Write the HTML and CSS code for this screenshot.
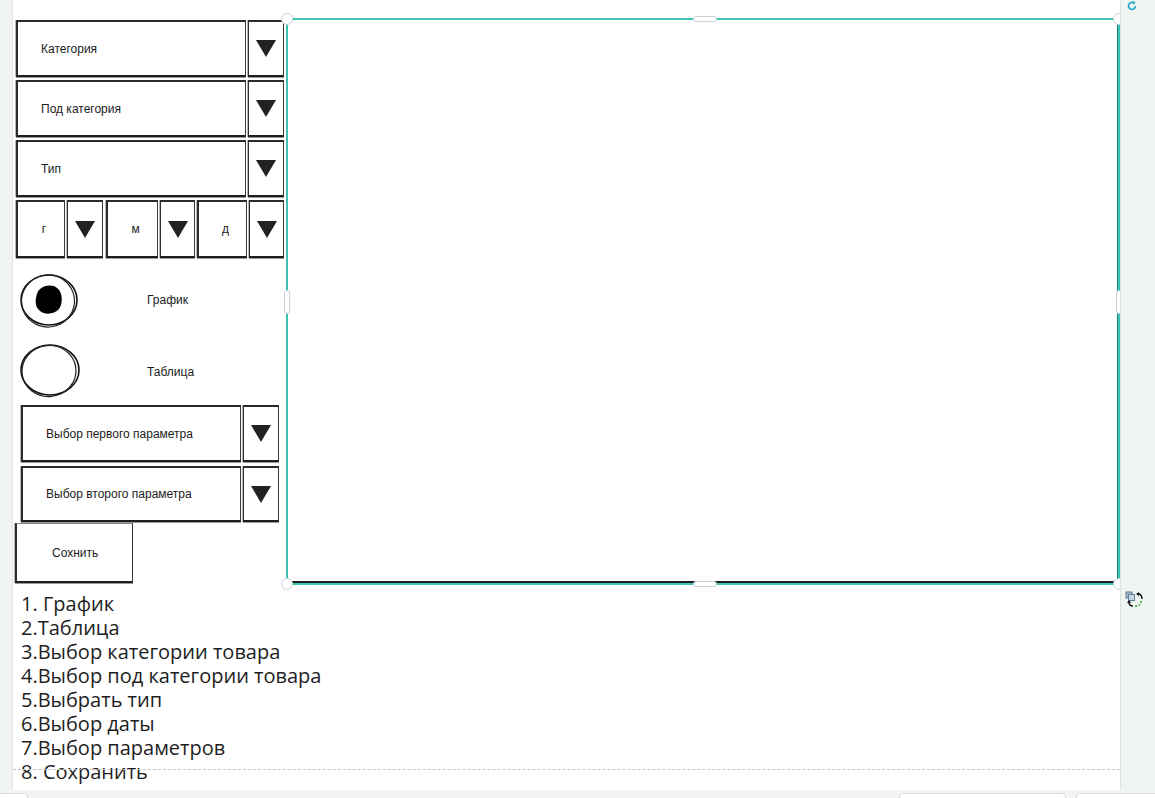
FILE: index.html
```html
<!DOCTYPE html>
<html lang="ru">
<head>
<meta charset="utf-8">
<title>Макет</title>
<link rel="stylesheet" href="styles.css">
</head>
<body>
<div class="page">
  <div class="side-left"></div>
  <main class="canvas">
    <div class="top">
      <aside class="panel">
        <div class="dd">
          <div class="box field">Категория</div>
          <div class="box arrow"><span class="tri"></span></div>
        </div>
        <div class="dd">
          <div class="box field">Под категория</div>
          <div class="box arrow"><span class="tri"></span></div>
        </div>
        <div class="dd">
          <div class="box field">Тип</div>
          <div class="box arrow"><span class="tri"></span></div>
        </div>
        <div class="date-row">
          <div class="box dfield w49">г</div>
          <div class="box arrow a36"><span class="tri"></span></div>
          <div class="box dfield w52 ml3">м</div>
          <div class="box arrow a35"><span class="tri"></span></div>
          <div class="box dfield w50">д</div>
          <div class="box arrow a35"><span class="tri"></span></div>
        </div>
        <div class="radio r1">
          <svg class="circ" width="64" height="60" viewBox="0 0 64 60">
            <ellipse cx="32" cy="30" rx="28" ry="25" fill="none" stroke="#111" stroke-width="1.6"/>
            <ellipse cx="31" cy="31" rx="26.5" ry="26" fill="none" stroke="#222" stroke-width="1.2" transform="rotate(-8 31 31)"/>
            <path d="M20 24 C22 16 34 13 40 18 C46 22 46 34 42 39 C37 45 26 45 22 40 C18 36 18 30 20 24 Z" fill="#000"/>
          </svg>
          <span class="rlabel rl1">График</span>
        </div>
        <div class="radio r2">
          <svg class="circ" width="64" height="60" viewBox="0 0 64 60">
            <ellipse cx="33" cy="30" rx="29" ry="25" fill="none" stroke="#111" stroke-width="1.6"/>
            <ellipse cx="32" cy="31" rx="27" ry="25.5" fill="none" stroke="#222" stroke-width="1.2" transform="rotate(-6 32 31)"/>
          </svg>
          <span class="rlabel">Таблица</span>
        </div>
        <div class="dd pd">
          <div class="box field pf">Выбор первого параметра</div>
          <div class="box arrow"><span class="tri"></span></div>
        </div>
        <div class="dd pd pd2">
          <div class="box field pf">Выбор второго параметра</div>
          <div class="box arrow"><span class="tri"></span></div>
        </div>
        <div class="box btn">Сохнить</div>
      </aside>
      <div class="frame">
        <span class="h c tl"></span>
        <span class="h c tr"></span>
        <span class="h c bl"></span>
        <span class="h c br"></span>
        <span class="h mh mt"></span>
        <span class="h mh mb"></span>
        <span class="h mv ml"></span>
        <span class="h mv mr"></span>
      </div>
    </div>
    <ol class="notes">
      <li>1. График</li>
      <li>2.Таблица</li>
      <li>3.Выбор категории товара</li>
      <li>4.Выбор под категории товара</li>
      <li>5.Выбрать тип</li>
      <li>6.Выбор даты</li>
      <li>7.Выбор параметров</li>
      <li>8. Сохранить</li>
    </ol>
    <div class="dash"></div>
  </main>
  <div class="side-right">
    <svg class="rot" width="12" height="12" viewBox="0 0 12 12">
      <path d="M9.5 6 A3.5 3.5 0 1 1 7.5 2.8" fill="none" stroke="#2ea8c8" stroke-width="1.8"/>
      <path d="M6.5 0.8 L9.8 2.4 L7.2 5 Z" fill="#2ea8c8"/>
    </svg>
    <svg class="tf" width="20" height="18" viewBox="0 0 20 18">
      <rect x="1" y="1" width="6" height="6" fill="#9fb7c6" stroke="#5d7f97" stroke-width="1"/>
      <rect x="3.5" y="3.5" width="6" height="6" fill="#c7d7e2" stroke="#5d7f97" stroke-width="1"/>
      <path d="M13 3 C16 3 17 5 17 8" fill="none" stroke="#111" stroke-width="1.4"/>
      <path d="M11 3 L14 1 L14 5 Z" fill="#111"/>
      <path d="M16 10 C16 14 14 15 10 15" fill="none" stroke="#3aa83a" stroke-width="1.6" stroke-dasharray="2 1.5"/>
      <path d="M4 11 C4 14 5 15 8 15" fill="none" stroke="#111" stroke-width="1.4"/>
      <path d="M2 12 L4 9 L6 12 Z" fill="#111"/>
    </svg>
  </div>
</div>
<div class="bottom-strip">
  <div class="bb b0"></div>
  <div class="spacer"></div>
  <div class="bb b1"></div>
  <div class="bb b2"></div>
</div>
</body>
</html>
```

FILE: styles.css
```css
html, body {
  margin: 0;
  padding: 0;
}
body {
  background: #f2f5f3;
  font-family: "Liberation Sans", Arial, sans-serif;
  color: #1b1b1b;
  width: 1155px;
  height: 798px;
  overflow: hidden;
}
.page {
  display: flex;
  height: 790px;
}
.side-left {
  width: 13px;
  background: #f1f5f2;
  border-right: 1px solid #e2e6e3;
  box-sizing: border-box;
}
.canvas {
  position: relative;
  width: 1107px;
  background: #fff;
  height: 790px;
}
.side-right {
  position: relative;
  flex: 1;
  background: #f1f5f2;
  border-left: 1px solid #dfe3e0;
}
.top {
  display: flex;
  height: 585px;
}
.panel {
  width: 273px;
  padding-top: 20px;
  box-sizing: border-box;
  display: flex;
  flex-direction: column;
}
.box {
  box-sizing: border-box;
  border: 1px solid #3a3a3a;
  border-top: 2px solid #2a2a2a;
  border-bottom: 2px solid #1e1e1e;
  border-left: 2px solid #2c2c2c;
  box-shadow: 0 1px 0 #9a9a9a, -1px 0 0 #b5b5b5;
  background: #fff;
  display: flex;
  align-items: center;
  font-size: 12px;
}
.dd {
  display: flex;
  gap: 2px;
  margin-left: 3px;
  height: 57px;
  margin-bottom: 3px;
}
.field {
  width: 230px;
  padding-left: 23px;
}
.arrow {
  width: 36px;
  justify-content: center;
  border-left-width: 1px;
}
.tri {
  width: 0;
  height: 0;
  border-left: 10px solid transparent;
  border-right: 10px solid transparent;
  border-top: 17px solid #222;
}
.date-row {
  display: flex;
  gap: 2px;
  margin-left: 3px;
  height: 58px;
}
.dfield {
  justify-content: center;
  padding-left: 6px;
}
.w49 { width: 49px; }
.w52 { width: 52px; }
.w50 { width: 50px; }
.ml3 { margin-left: 1px; }
.a36 { width: 36px; }
.a35 { width: 35px; }
.radio {
  display: flex;
  align-items: center;
  height: 60px;
}
.r1 { margin-top: 12px; }
.r2 { margin-top: 10px; }
.circ {
  margin-left: 4px;
  flex: none;
}
.rlabel {
  font-size: 12px;
  margin-left: 66px;
  padding-top: 4px;
}
.rl1 { padding-top: 0; }
.pd {
  margin-left: 8px;
  margin-top: 5px;
  margin-bottom: 4px;
}
.pd2 {
  margin-top: 0;
  height: 56px;
  margin-bottom: 1px;
}
.pf {
  width: 220px;
  padding-left: 23px;
}
.btn {
  margin-left: 2px;
  width: 118px;
  height: 60px;
  padding-left: 35px;
  border-top: 1px solid #888;
}
.frame {
  position: relative;
  margin-top: 18px;
  width: 834px;
  height: 567px;
  box-sizing: border-box;
  border: 2px solid #3cc4b3;
  box-shadow: inset 0 -2px 0 #1d1d1d, inset -1px 0 0 #1f7f74;
  background: #fff;
}
.h {
  position: absolute;
  background: #fff;
  border: 1px solid #c9d2d6;
  box-sizing: border-box;
}
.c {
  width: 12px;
  height: 12px;
  border-radius: 50%;
}
.tl { left: -7px; top: -7px; }
.tr { right: -7px; top: -7px; }
.bl { left: -7px; bottom: -7px; }
.br { right: -7px; bottom: -7px; }
.mh {
  width: 24px;
  height: 6px;
  border-radius: 3px;
  left: 405px;
}
.mt { top: -4px; }
.mb { bottom: -4px; }
.mv {
  width: 6px;
  height: 24px;
  border-radius: 3px;
  top: 270px;
}
.ml { left: -4px; }
.mr { right: -4px; }
.notes {
  list-style: none;
  margin: 7px 0 0;
  padding: 0 0 0 8px;
  font-family: "Open Sans", "Noto Sans", sans-serif;
  font-size: 20px;
  line-height: 24px;
  color: #1e1e1e;
}
.dash {
  position: absolute;
  left: 0;
  right: 0;
  top: 769px;
  border-top: 1px dashed #c7c7c7;
}
.rot {
  position: absolute;
  left: 5px;
  top: 0px;
}
.tf {
  position: absolute;
  left: 4px;
  top: 591px;
}
.bottom-strip {
  display: flex;
  height: 8px;
  padding-top: 3px;
  box-sizing: border-box;
  gap: 10px;
}
.bb {
  background: #fff;
  border: 1px solid #dcdcdc;
  border-bottom: none;
  border-radius: 4px 4px 0 0;
}
.b0 { width: 28px; margin-left: -2px; }
.spacer { flex: 1; }
.b1 { width: 165px; }
.b2 { width: 85px; margin-right: -8px; }
```
